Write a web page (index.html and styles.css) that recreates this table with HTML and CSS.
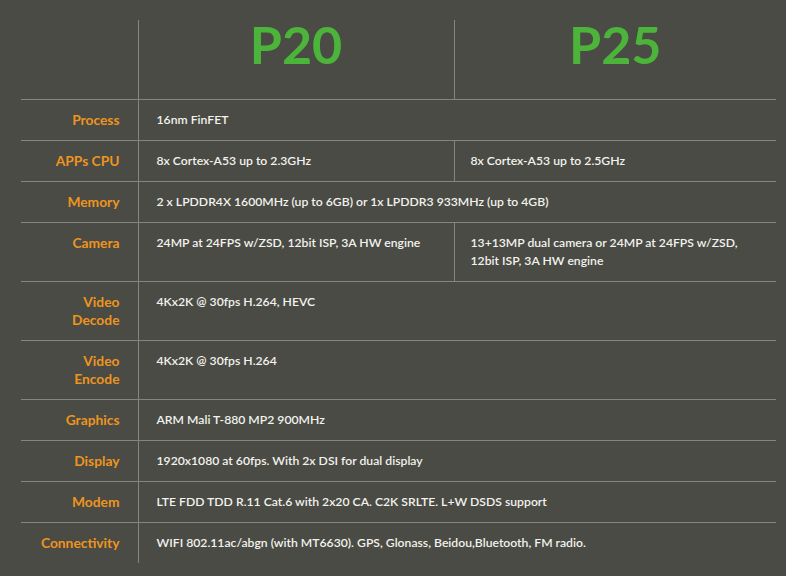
FILE: index.html
```html
<!DOCTYPE html>
<html>
<head>
<meta charset="utf-8">
<link rel="stylesheet" href="styles.css">
</head>
<body>
<table class="spec">
  <colgroup>
    <col class="c-label">
    <col class="c-a">
    <col class="c-b">
  </colgroup>
  <thead>
    <tr class="head">
      <th class="corner"></th>
      <th class="model">P20</th>
      <th class="model">P25</th>
    </tr>
  </thead>
  <tbody>
    <tr><th>Process</th><td colspan="2">16nm FinFET</td></tr>
    <tr><th>APPs CPU</th><td>8x Cortex-A53 up to 2.3GHz</td><td>8x Cortex-A53 up to 2.5GHz</td></tr>
    <tr><th>Memory</th><td colspan="2">2 x LPDDR4X 1600MHz (up to 6GB) or 1x LPDDR3 933MHz (up to 4GB)</td></tr>
    <tr><th>Camera</th><td>24MP at 24FPS w/ZSD, 12bit ISP, 3A HW engine</td><td>13+13MP dual camera or 24MP at 24FPS w/ZSD, 12bit ISP, 3A HW engine</td></tr>
    <tr><th>Video<br>Decode</th><td colspan="2">4Kx2K @ 30fps H.264, HEVC</td></tr>
    <tr><th>Video<br>Encode</th><td colspan="2">4Kx2K @ 30fps H.264</td></tr>
    <tr><th>Graphics</th><td colspan="2">ARM Mali T-880 MP2 900MHz</td></tr>
    <tr><th>Display</th><td colspan="2">1920x1080 at 60fps. With 2x DSI for dual display</td></tr>
    <tr><th>Modem</th><td colspan="2">LTE FDD TDD R.11 Cat.6 with 2x20 CA. C2K SRLTE. L+W DSDS support</td></tr>
    <tr class="last"><th>Connectivity</th><td colspan="2">WIFI 802.11ac/abgn (with MT6630). GPS, Glonass, Beidou,Bluetooth, FM radio.</td></tr>
  </tbody>
</table>
</body>
</html>
```
FILE: styles.css
```css
html, body {
  margin: 0;
  padding: 0;
  background: #4a4b44;
}
body {
  width: 786px;
  height: 576px;
  overflow: hidden;
  font-family: Lato, "Open Sans", sans-serif;
}
.spec {
  margin: 20px 0 0 21px;
  width: 755px;
  border-collapse: collapse;
  table-layout: fixed;
}
.c-label { width: 117px; }
.c-a { width: 316px; }
.c-b { width: 322px; }
.spec th, .spec td {
  padding: 11px 0 11px 0;
  line-height: 18px;
  font-size: 12.2px;
  vertical-align: top;
  text-align: left;
}
.spec tbody tr { border-top: 1px solid #85867f; }
.spec tbody th {
  color: #ee9420;
  font-weight: 700;
  font-size: 13.8px;
  text-align: right;
  padding-right: 18px;
  border-right: 1px solid #85867f;
}
.spec td {
  color: #f2f2ee;
  font-weight: 600;
  padding-left: 18px;
  padding-right: 10px;
}
.spec td + td { border-left: 1px solid #85867f; padding-left: 16px; }
.head th { padding: 0; height: 79px; }
.head .corner { border-right: 1px solid #85867f; }
.head .model {
  color: #4cb43a;
  font-size: 52px;
  font-weight: 700;
  text-align: center;
  vertical-align: top;
  line-height: 48px;
}
.head .model + .model { border-left: 1px solid #85867f; }
```
